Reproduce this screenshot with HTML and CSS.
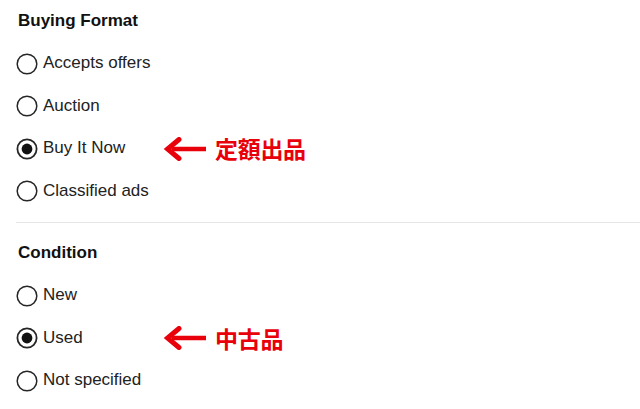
FILE: index.html
```html
<!DOCTYPE html>
<html lang="en">
<head>
<meta charset="utf-8">
<title>Filters</title>
<link rel="stylesheet" href="styles.css">
</head>
<body>
<div class="panel">
  <section class="group">
    <h3 class="group-title">Buying Format</h3>
    <div class="options">
      <div class="option">
        <svg class="radio" viewBox="0 0 22 22"><circle cx="11" cy="11" r="9.8" class="ring"/></svg>
        <span class="label">Accepts offers</span>
      </div>
      <div class="option">
        <svg class="radio" viewBox="0 0 22 22"><circle cx="11" cy="11" r="9.8" class="ring"/></svg>
        <span class="label">Auction</span>
      </div>
      <div class="option">
        <svg class="radio" viewBox="0 0 22 22"><circle cx="11" cy="11" r="9.6" class="ring checked"/><circle cx="11" cy="11" r="5.4" class="dot"/></svg>
        <span class="label">Buy It Now</span>
        <span class="note">
          <svg class="arrow" viewBox="0 0 44 24"><path d="M8 12H42" class="shaft"/><path d="M15 2.5L3.5 12L15 21.5" class="head"/></svg>
          <span class="note-text">定額出品</span>
        </span>
      </div>
      <div class="option">
        <svg class="radio" viewBox="0 0 22 22"><circle cx="11" cy="11" r="9.8" class="ring"/></svg>
        <span class="label">Classified ads</span>
      </div>
    </div>
  </section>
  <hr class="divider">
  <section class="group second">
    <h3 class="group-title">Condition</h3>
    <div class="options">
      <div class="option">
        <svg class="radio" viewBox="0 0 22 22"><circle cx="11" cy="11" r="9.8" class="ring"/></svg>
        <span class="label">New</span>
      </div>
      <div class="option">
        <svg class="radio" viewBox="0 0 22 22"><circle cx="11" cy="11" r="9.6" class="ring checked"/><circle cx="11" cy="11" r="5.4" class="dot"/></svg>
        <span class="label">Used</span>
        <span class="note">
          <svg class="arrow" viewBox="0 0 44 24"><path d="M8 12H42" class="shaft"/><path d="M15 2.5L3.5 12L15 21.5" class="head"/></svg>
          <span class="note-text">中古品</span>
        </span>
      </div>
      <div class="option">
        <svg class="radio" viewBox="0 0 22 22"><circle cx="11" cy="11" r="9.8" class="ring"/></svg>
        <span class="label">Not specified</span>
      </div>
    </div>
  </section>
</div>
</body>
</html>
```
FILE: styles.css
```css
html, body {
  margin: 0;
  padding: 0;
  background: #ffffff;
}

body {
  font-family: "Liberation Sans", Arial, sans-serif;
  color: #222222;
  overflow: hidden;
}

.panel {
  padding: 9px 0 0 16px;
}

.group-title {
  margin: 0 0 9px 2px;
  font-size: 17px;
  line-height: 24px;
  font-weight: 700;
  color: #111111;
}

.second {
  padding-top: 18px;
}

.options {
  display: flex;
  flex-direction: column;
}

.option {
  display: grid;
  grid-template-columns: 22px 119px auto;
  align-items: center;
  column-gap: 5px;
  height: 42.5px;
}

.radio {
  width: 22px;
  height: 22px;
  margin-top: 1px;
}

.ring {
  fill: #ffffff;
  stroke: #262626;
  stroke-width: 1.5;
}

.ring.checked {
  stroke-width: 1.8;
}

.dot {
  fill: #111111;
}

.label {
  font-size: 17px;
  line-height: 22px;
  color: #222222;
  white-space: nowrap;
}

.note {
  display: flex;
  align-items: center;
  column-gap: 7px;
}

.arrow {
  width: 44px;
  height: 24px;
  margin-left: -3px;
  margin-top: 1px;
}

.shaft {
  stroke: #e8000b;
  stroke-width: 4.4;
  fill: none;
}

.head {
  stroke: #e8000b;
  stroke-width: 5;
  fill: none;
  stroke-linecap: round;
  stroke-linejoin: miter;
}

.note-text {
  font-family: "Noto Sans CJK JP", "Noto Sans CJK SC", sans-serif;
  font-weight: 700;
  font-size: 23px;
  line-height: 28px;
  color: #e8000b;
  letter-spacing: -0.3px;
}

.divider {
  margin: 10px 0 0 0;
  border: 0;
  border-top: 1px solid #e6e6e6;
  height: 0;
}
```
